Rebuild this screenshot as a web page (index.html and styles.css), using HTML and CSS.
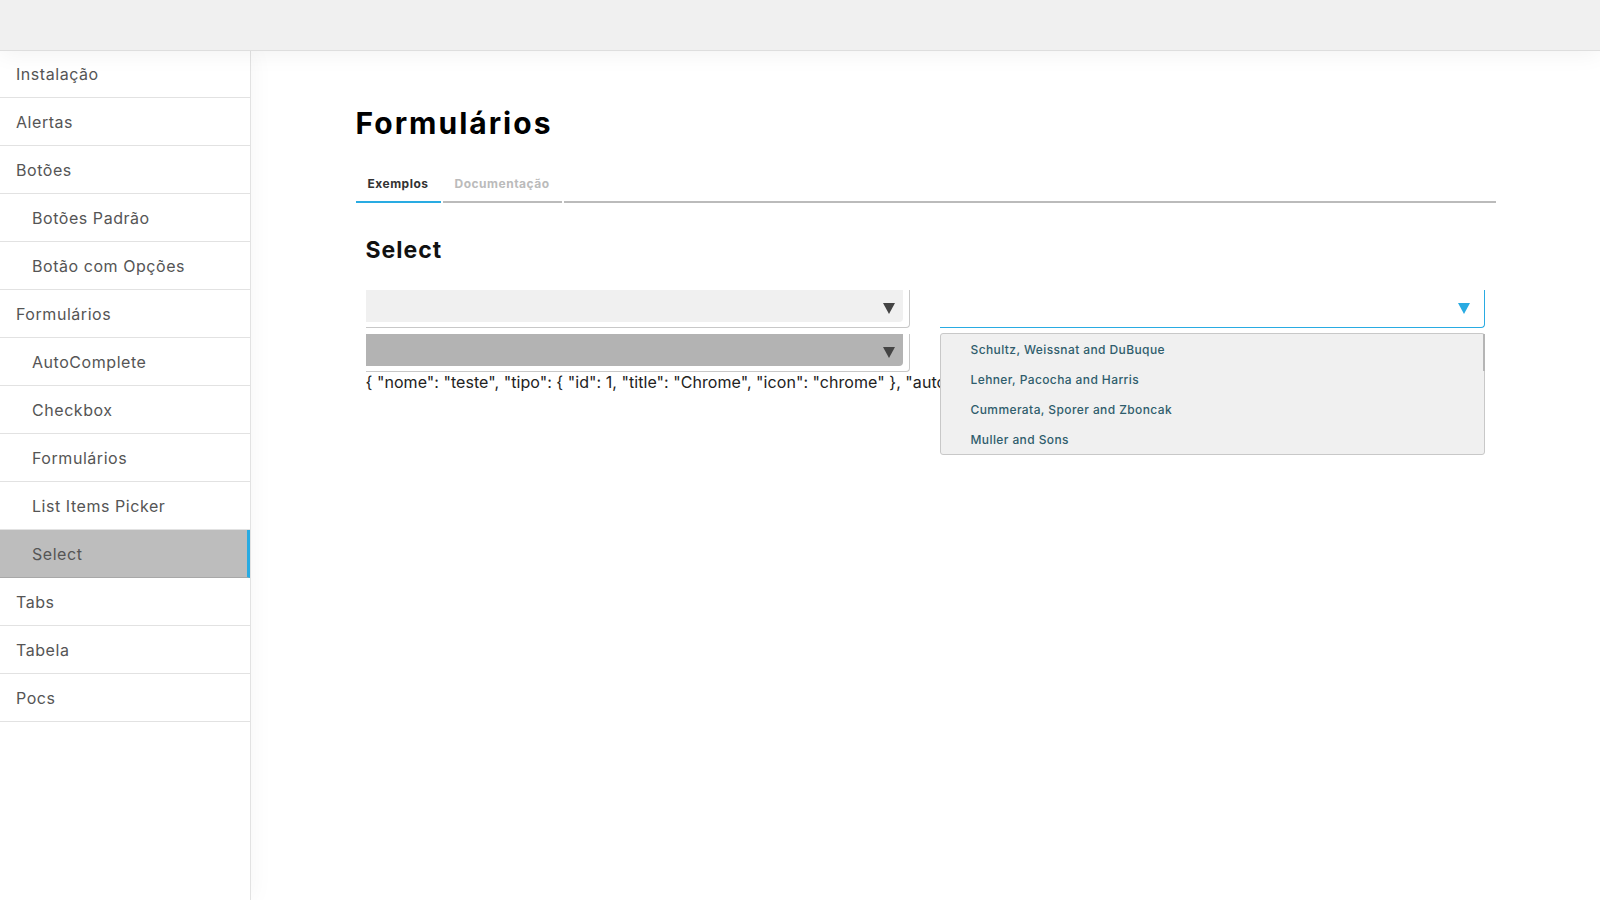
FILE: index.html
```html
<!DOCTYPE html>
<html lang="pt-BR">
<head>
<meta charset="utf-8">
<title>Formulários - Select</title>
<link rel="stylesheet" href="styles.css">
</head>
<body>
<header class="topbar"></header>
<div class="layout">
  <nav class="sidebar">
    <ul class="menu">
      <li class="menu-item">Instalação</li>
      <li class="menu-item">Alertas</li>
      <li class="menu-item">Botões</li>
      <li class="menu-item sub">Botões Padrão</li>
      <li class="menu-item sub">Botão com Opções</li>
      <li class="menu-item">Formulários</li>
      <li class="menu-item sub">AutoComplete</li>
      <li class="menu-item sub">Checkbox</li>
      <li class="menu-item sub">Formulários</li>
      <li class="menu-item sub">List Items Picker</li>
      <li class="menu-item sub active">Select</li>
      <li class="menu-item">Tabs</li>
      <li class="menu-item">Tabela</li>
      <li class="menu-item">Pocs</li>
    </ul>
  </nav>
  <main class="main">
    <div class="container">
      <h1 class="page-title">Formulários</h1>
      <div class="tabs">
        <span class="tab active">Exemplos</span>
        <span class="tab">Documentação</span>
        <span class="tab-fill"></span>
      </div>
      <section class="section">
        <h2 class="section-title">Select</h2>
        <div class="row">
          <div class="col">
            <div class="select">
              <div class="select-field">
                <svg class="arrow" viewBox="0 0 12 11" width="12" height="11"><polygon points="0,0 12,0 6,11" fill="#444"/></svg>
              </div>
            </div>
            <div class="select disabled">
              <div class="select-field">
                <svg class="arrow" viewBox="0 0 12 11" width="12" height="11"><polygon points="0,0 12,0 6,11" fill="#444"/></svg>
              </div>
            </div>
            <div class="json">{ "nome": "teste", "tipo": { "id": 1, "title": "Chrome", "icon": "chrome" }, "autocomplete": null }</div>
          </div>
          <div class="col">
            <div class="select open">
              <div class="select-field">
                <svg class="arrow" viewBox="0 0 12 11" width="12" height="11"><polygon points="0,0 12,0 6,11" fill="#29abe2"/></svg>
              </div>
            </div>
            <div class="dropdown">
              <ul class="options">
                <li class="option">Schultz, Weissnat and DuBuque</li>
                <li class="option">Lehner, Pacocha and Harris</li>
                <li class="option">Cummerata, Sporer and Zboncak</li>
                <li class="option">Muller and Sons</li>
              </ul>
              <span class="scroll-thumb"></span>
            </div>
          </div>
        </div>
      </section>
    </div>
  </main>
</div>
</body>
</html>
```
FILE: styles.css
```css
* { box-sizing: border-box; }
html, body {
  margin: 0;
  padding: 0;
  height: 900px;
  overflow: hidden;
  background: #fff;
  font-family: Inter, "Noto Sans", "Liberation Sans", sans-serif;
  color: #222;
}
.topbar {
  position: relative;
  z-index: 3;
  height: 51px;
  background: #f0f0f0;
  border-bottom: 1px solid #dedede;
  box-shadow: 0 4px 22px rgba(0, 0, 0, 0.05);
}
.layout {
  display: flex;
  height: 849px;
}
.sidebar {
  position: relative;
  z-index: 2;
  width: 251px;
  flex: none;
  background: #fff;
  border-right: 1px solid #e2e2e2;
  box-shadow: 2px 0 22px rgba(0, 0, 0, 0.04);
}
.menu {
  list-style: none;
  margin: 0;
  padding: 0;
}
.menu-item {
  display: flex;
  align-items: center;
  height: 48px;
  padding-left: 16px;
  border-bottom: 1px solid #e2e2e2;
  font-size: 16px;
  letter-spacing: 0.55px;
  color: #555;
}
.menu-item:first-child { height: 47px; }
.menu-item.sub { padding-left: 32px; }
.menu-item.active {
  background: #bdbdbd;
  border-right: 3px solid #29abe2;
  border-bottom-color: #a8a8a8;
}
.main {
  flex: 1;
  background: #fff;
}
.container {
  width: 1140px;
  margin: 0 auto;
  padding-top: 54px;
}
.page-title {
  margin: 0;
  font-size: 30px;
  line-height: 36px;
  font-weight: 700;
  letter-spacing: 2px;
  color: #000;
}
.tabs {
  display: flex;
  gap: 2px;
  margin-top: 26px;
}
.tab {
  padding: 9px 12px;
  font-size: 12px;
  line-height: 16px;
  font-weight: 700;
  letter-spacing: 0.5px;
  color: #bbb;
  border-bottom: 2px solid #bbb;
}
.tab.active {
  color: #333;
  border-bottom-color: #29abe2;
}
.tab-fill {
  flex: 1;
  border-bottom: 2px solid #bbb;
}
.section {
  padding: 0 10px;
}
.section-title {
  margin: 33px 0 26px;
  font-size: 23px;
  line-height: 28px;
  font-weight: 700;
  letter-spacing: 1px;
  color: #111;
}
.row {
  display: grid;
  grid-template-columns: 544px 545px;
  column-gap: 30px;
}
.col {
  min-width: 0;
}
.select {
  padding: 0 6px 5px 0;
  border-right: 1px solid #c8c8c8;
  border-bottom: 1px solid #c8c8c8;
  border-bottom-right-radius: 4px;
}
.select + .select { margin-top: 6px; }
.select-field {
  height: 32px;
  display: flex;
  align-items: center;
  justify-content: flex-end;
  padding: 4px 8px 0 0;
  background: #f0f0f0;
  border-bottom-right-radius: 4px;
}
.select.disabled .select-field { background: #b3b3b3; }
.select.open {
  border-color: #29abe2;
}
.select.open .select-field {
  background: #fff;
}
.arrow { display: block; }
.json {
  white-space: nowrap;
  font-size: 16px;
  line-height: 20px;
  letter-spacing: 0.05px;
  color: #222;
}
.dropdown {
  position: relative;
  z-index: 1;
  margin-top: 5px;
  background: #f0f0f0;
  border: 1px solid #c8c8c8;
  border-radius: 3px;
}
.options {
  list-style: none;
  margin: 0;
  padding: 0;
}
.option {
  height: 30px;
  display: flex;
  align-items: center;
  padding-left: 30px;
  font-size: 12px;
  font-weight: 500;
  letter-spacing: 0.4px;
  color: #2f5d6c;
}
.scroll-thumb {
  position: absolute;
  top: 0;
  right: -1px;
  width: 2px;
  height: 37px;
  background: #b5b5b5;
}
```
